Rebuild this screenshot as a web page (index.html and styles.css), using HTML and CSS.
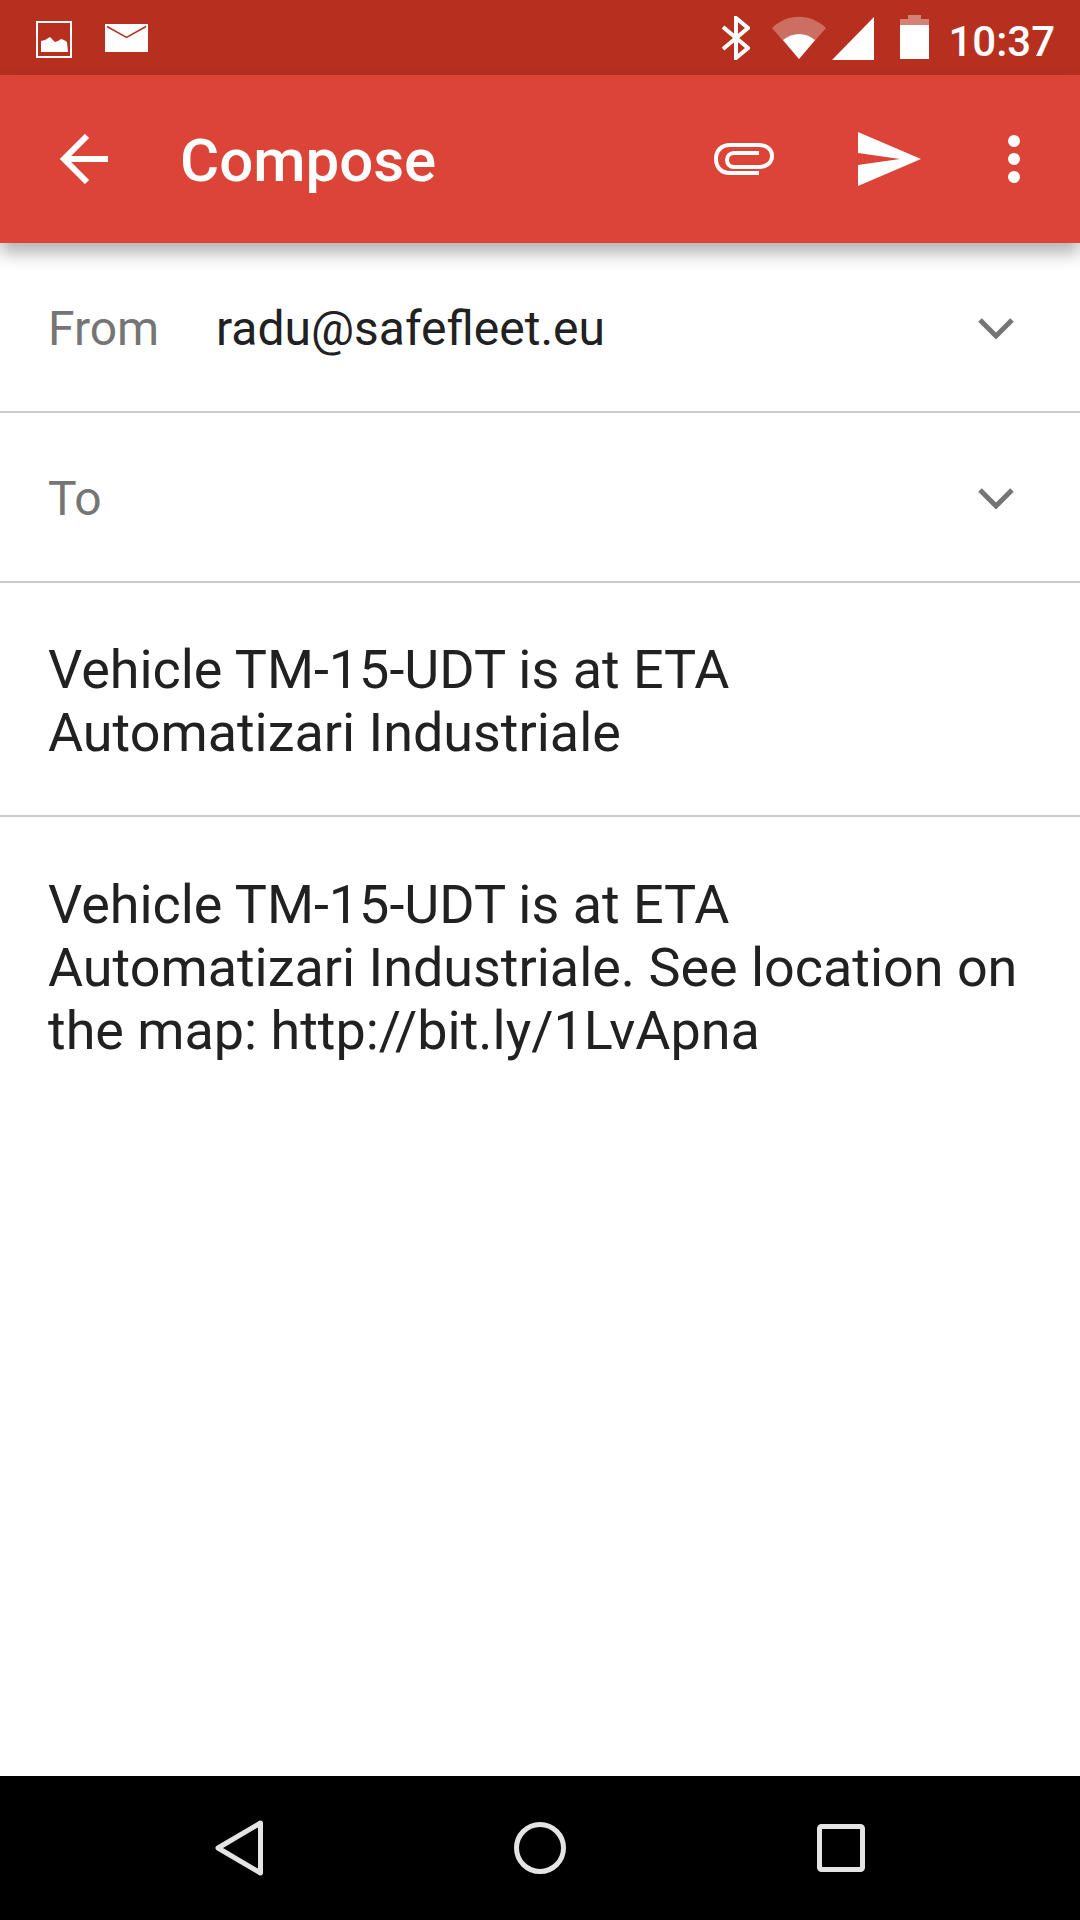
FILE: index.html
```html
<!DOCTYPE html>
<html lang="en">
<head>
  <meta charset="UTF-8">
  <title>Compose</title>
  <link rel="stylesheet" href="styles.css">
</head>
<body>
  <div class="phone">
    <!-- Status bar -->
    <div class="status-bar">
      <svg class="ic-image" width="36" height="37" viewBox="0 0 36 37">
        <rect x="1" y="1" width="34" height="35" fill="none" stroke="#fff" stroke-width="2"/>
        <path d="M5 31V20l4-1 5-3 5 5 3-1 3-2 3 1 3 2 1 10z" fill="#fff"/>
      </svg>
      <svg class="ic-mail" width="43" height="28" viewBox="0 0 43 28">
        <path d="M0 0h43v28H0z" fill="#fff"/>
        <path d="M2 2.500l19.500 11L41 2.500" fill="none" stroke="#b7301f" stroke-width="1.500"/>
      </svg>
      <div class="status-right">
        <svg class="ic-bt" width="28" height="44" viewBox="0 0 28 44">
          <path d="M1 11l25 21-12 10V2l12 10L1 33" fill="none" stroke="#fff" stroke-width="4"/>
        </svg>
        <svg class="ic-wifi" width="54" height="44" viewBox="0 0 54 44">
          <path d="M0 12C16-3 38-3 54 12L27 43z" fill="#fff" fill-opacity=".3"/>
          <path d="M11 24c10-8 22-8 32 0L27 43z" fill="#fff"/>
        </svg>
        <svg class="ic-signal" width="43" height="43" viewBox="0 0 43 43">
          <path d="M42 0v43H0z" fill="#fff"/>
        </svg>
        <svg class="ic-battery" width="29" height="44" viewBox="0 0 29 44">
          <path d="M8 0h13v4h8v6H0V4h8z" fill="#fff" fill-opacity=".4"/>
          <path d="M0 10h29v34H0z" fill="#fff"/>
        </svg>
        <span class="clock">10:37</span>
      </div>
    </div>

    <!-- Toolbar -->
    <div class="toolbar">
      <svg class="ic-back" width="48" height="50" viewBox="0 0 48 50">
        <path d="M48 25H4M27 2L4 25l23 23" fill="none" stroke="#fff" stroke-width="6"/>
      </svg>
      <span class="toolbar-title">Compose</span>
      <svg class="ic-clip" width="60" height="34" viewBox="0 0 60 34">
        <path d="M45 31H16C7 31 2 25 2 17S7 3 16 3h29c7 0 13 4 13 11s-6 11-13 11H20c-4 0-7-3-7-7s3-7 7-7h25" fill="none" stroke="#fff" stroke-width="4"/>
      </svg>
      <svg class="ic-send" width="63" height="54" viewBox="0 0 63 54">
        <path d="M0 0l63 27L0 54V33l42-6-42-6z" fill="#fff"/>
      </svg>
      <svg class="ic-more" width="12" height="48" viewBox="0 0 12 48">
        <circle cx="6" cy="6" r="6" fill="#fff"/>
        <circle cx="6" cy="24" r="6" fill="#fff"/>
        <circle cx="6" cy="42" r="6" fill="#fff"/>
      </svg>
    </div>

    <!-- Compose form -->
    <div class="form">
      <div class="field">
        <span class="field-label">From</span>
        <span class="field-value">radu@safefleet.eu</span>
        <svg class="chevron" width="36" height="22" viewBox="0 0 36 22">
          <path d="M2 3l16 16L34 3" fill="none" stroke="#757575" stroke-width="5"/>
        </svg>
      </div>
      <div class="field">
        <span class="field-label">To</span>
        <span class="field-value"></span>
        <svg class="chevron" width="36" height="22" viewBox="0 0 36 22">
          <path d="M2 3l16 16L34 3" fill="none" stroke="#757575" stroke-width="5"/>
        </svg>
      </div>
      <div class="subject">Vehicle TM-15-UDT is at ETA Automatizari Industriale</div>
      <div class="body-text">Vehicle TM-15-UDT is at ETA Automatizari Industriale. See location on the map: http://bit.ly/1LvApna</div>
    </div>

    <!-- Navigation bar -->
    <div class="nav-bar">
      <svg width="48" height="56" viewBox="0 0 48 56">
        <path d="M45.500 3L3 28l42.500 25z" fill="none" stroke="#e4e4e4" stroke-width="5" stroke-linejoin="round"/>
      </svg>
      <svg width="52" height="52" viewBox="0 0 52 52">
        <circle cx="26" cy="26" r="23.5" fill="none" stroke="#e4e4e4" stroke-width="5"/>
      </svg>
      <svg width="48" height="48" viewBox="0 0 48 48">
        <rect x="2.5" y="2.5" width="43" height="43" rx="2" fill="none" stroke="#e4e4e4" stroke-width="5"/>
      </svg>
    </div>
  </div>
</body>
</html>
```

FILE: styles.css
```css
/* General Styles */
* {
  box-sizing: border-box;
}

body {
  margin: 0;
  background-color: #fff;
  font-family: Roboto, "Liberation Sans", sans-serif;
}

.phone {
  width: 1080px;
  height: 1920px;
  display: flex;
  flex-direction: column;
  overflow: hidden;
}

/* Status bar */
.status-bar {
  height: 75px;
  flex: none;
  display: flex;
  align-items: flex-start;
  padding-left: 36px;
  background-color: #b7301f;
}

.ic-image {
  margin-top: 21px;
}

.ic-mail {
  margin-top: 24px;
  margin-left: 33px;
}

.status-right {
  margin-left: auto;
  display: flex;
  align-items: flex-start;
  padding-top: 15px;
}

.ic-bt {
  margin-top: 1px;
  margin-right: 22px;
}

.ic-wifi {
  margin-top: 1px;
  margin-right: 6px;
}

.ic-signal {
  margin-top: 2px;
  margin-right: 25px;
}

.clock {
  margin-left: 19px;
  margin-right: 25px;
  margin-top: 2px;
  color: #fff;
  font-size: 42px;
  line-height: 49px;
  font-weight: 500;
}

/* Toolbar */
.toolbar {
  height: 168px;
  flex: none;
  display: flex;
  align-items: center;
  padding-left: 60px;
  position: relative;
  z-index: 1;
  background-color: #db4437;
  box-shadow: 0 10px 16px rgba(0, 0, 0, 0.3);
}

.toolbar-title {
  margin-left: 72px;
  margin-top: 2px;
  color: #fff;
  font-size: 60px;
  font-weight: 500;
}

.ic-clip {
  margin-left: auto;
}

.ic-send {
  margin-left: 84px;
}

.ic-more {
  margin-left: 87px;
  margin-right: 60px;
}

/* Compose form */
.form {
  flex: 1;
  color: #212121;
  font-size: 48px;
  line-height: 63px;
}

.field {
  height: 170px;
  display: flex;
  align-items: center;
  padding: 2px 66px 0 48px;
  border-bottom: 2px solid #cbcbcb;
}

.field-label {
  width: 168px;
  color: #757575;
}

.field-value {
  flex: 1;
}

.subject {
  height: 234px;
  padding: 55px 48px 0;
  border-bottom: 2px solid #cbcbcb;
  font-size: 53.9px;
}

.body-text {
  padding: 56px 48px 0;
  font-size: 53.9px;
}

/* Navigation bar */
.nav-bar {
  height: 144px;
  flex: none;
  display: flex;
  align-items: center;
  padding-left: 215px;
  gap: 251px;
  background-color: #000;
}
```
